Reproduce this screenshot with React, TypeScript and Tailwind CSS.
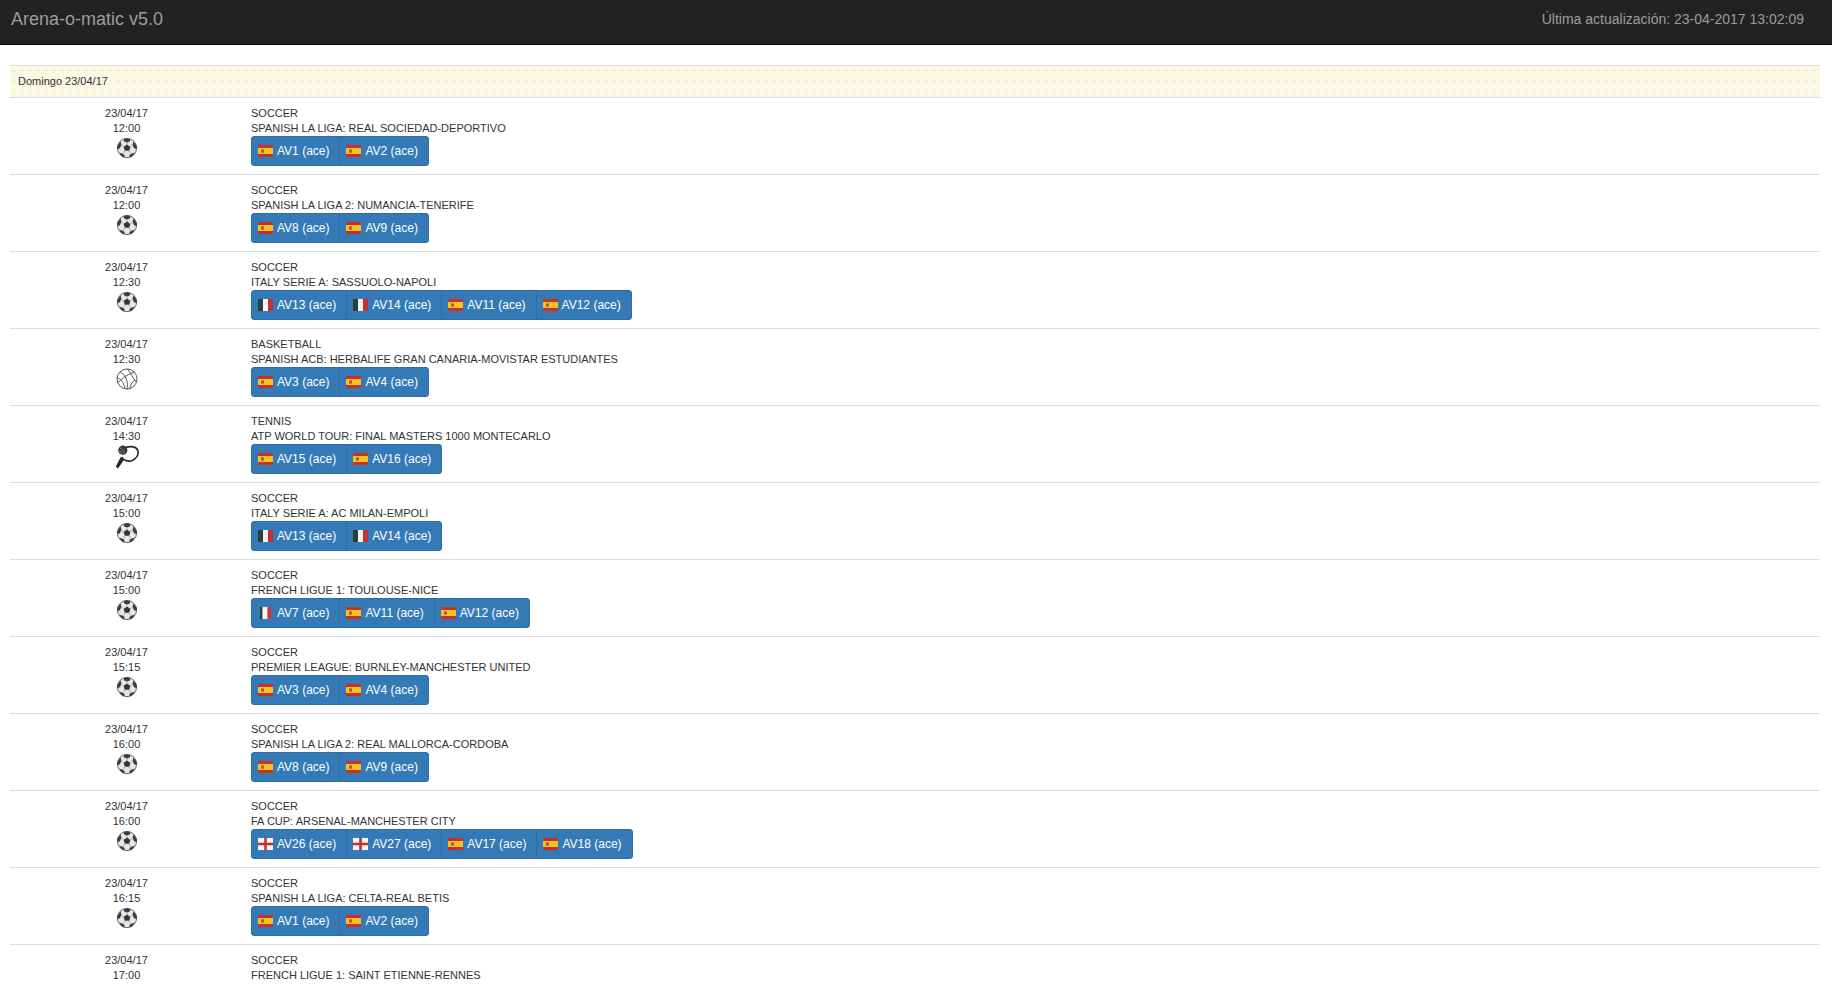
type FlagCode = "es" | "it" | "fr" | "en";
type Channel = { name: string; flag: FlagCode };
type EventRow = {
  time: string;
  sport: "SOCCER" | "BASKETBALL" | "TENNIS";
  title: string;
  channels: Channel[];
};

const es = (name: string): Channel => ({ name, flag: "es" });
const it = (name: string): Channel => ({ name, flag: "it" });

const events: EventRow[] = [
  { time: "12:00", sport: "SOCCER", title: "SPANISH LA LIGA: REAL SOCIEDAD-DEPORTIVO", channels: [es("AV1"), es("AV2")] },
  { time: "12:00", sport: "SOCCER", title: "SPANISH LA LIGA 2: NUMANCIA-TENERIFE", channels: [es("AV8"), es("AV9")] },
  { time: "12:30", sport: "SOCCER", title: "ITALY SERIE A: SASSUOLO-NAPOLI", channels: [it("AV13"), it("AV14"), es("AV11"), es("AV12")] },
  { time: "12:30", sport: "BASKETBALL", title: "SPANISH ACB: HERBALIFE GRAN CANARIA-MOVISTAR ESTUDIANTES", channels: [es("AV3"), es("AV4")] },
  { time: "14:30", sport: "TENNIS", title: "ATP WORLD TOUR: FINAL MASTERS 1000 MONTECARLO", channels: [es("AV15"), es("AV16")] },
  { time: "15:00", sport: "SOCCER", title: "ITALY SERIE A: AC MILAN-EMPOLI", channels: [it("AV13"), it("AV14")] },
  { time: "15:00", sport: "SOCCER", title: "FRENCH LIGUE 1: TOULOUSE-NICE", channels: [{ name: "AV7", flag: "fr" }, es("AV11"), es("AV12")] },
  { time: "15:15", sport: "SOCCER", title: "PREMIER LEAGUE: BURNLEY-MANCHESTER UNITED", channels: [es("AV3"), es("AV4")] },
  { time: "16:00", sport: "SOCCER", title: "SPANISH LA LIGA 2: REAL MALLORCA-CORDOBA", channels: [es("AV8"), es("AV9")] },
  { time: "16:00", sport: "SOCCER", title: "FA CUP: ARSENAL-MANCHESTER CITY", channels: [{ name: "AV26", flag: "en" }, { name: "AV27", flag: "en" }, es("AV17"), es("AV18")] },
  { time: "16:15", sport: "SOCCER", title: "SPANISH LA LIGA: CELTA-REAL BETIS", channels: [es("AV1"), es("AV2")] },
  { time: "17:00", sport: "SOCCER", title: "FRENCH LIGUE 1: SAINT ETIENNE-RENNES", channels: [] },
];

function Flag({ code }: { code: FlagCode }) {
  return (
    <svg width="15" height="12" viewBox="0 0 15 12" className="mb-[1px] shrink-0">
      {code === "es" && (
        <>
          <rect width="15" height="12" fill="#c9302c" />
          <rect y="3" width="15" height="6" fill="#f3c324" />
          <rect x="3.2" y="4.4" width="2.6" height="3.2" fill="#b5482a" />
        </>
      )}
      {code === "it" && (
        <>
          <rect width="15" height="12" fill="#f4f4f4" />
          <rect width="5" height="12" fill="#2b4037" />
          <rect x="10" width="5" height="12" fill="#c62f30" />
        </>
      )}
      {code === "fr" && (
        <>
          <rect x="2" width="11" height="12" fill="#f4f4f4" />
          <rect x="2" width="2.4" height="12" fill="#2b4037" />
          <rect x="9.4" width="3.6" height="12" fill="#d03436" />
        </>
      )}
      {code === "en" && (
        <>
          <rect width="15" height="12" fill="#f6f6f6" />
          <rect x="6.2" width="2.6" height="12" fill="#c9302c" />
          <rect y="4.7" width="15" height="2.6" fill="#c9302c" />
        </>
      )}
    </svg>
  );
}

function SoccerIcon() {
  return (
    <svg width="20" height="20" viewBox="0 0 20 20">
      <circle cx="10" cy="10" r="9.6" fill="#e8e8e8" stroke="#55555a" strokeWidth="0.9" />
      <path d="M10 6.4 13.4 8.9 12.2 12.8H7.8L6.6 8.9Z" fill="#34343a" />
      <path d="M6.6 1.2 10 .2l3.4 1-.6 2.4L10 4.6 7.2 3.6Z" fill="#3a3a40" />
      <path d="M16.4 3.4 19.8 8l-.2 3-2.6-.8-1.4-3.6Z" fill="#3a3a40" />
      <path d="M3.6 3.4.2 8l.2 3 2.6-.8 1.4-3.6Z" fill="#3a3a40" />
      <path d="M14.8 15.4 17.6 14.8 15.8 17.8 12.8 19.4l-.4-2.4Z" fill="#3a3a40" />
      <path d="M5.2 15.4 2.4 14.8 4.2 17.8 7.2 19.4l.4-2.4Z" fill="#3a3a40" />
      <path
        d="M10 4.6v2M13.4 9l2.4-2.4M12 12.8l1.4 2.6M8 12.8l-1.4 2.6M6.6 9 4.2 6.6"
        stroke="#8a8a8e"
        strokeWidth="0.7"
        fill="none"
      />
    </svg>
  );
}

function BasketballIcon() {
  return (
    <svg width="22" height="22" viewBox="0 0 22 22" fill="none" stroke="#45454f" strokeWidth="0.9">
      <circle cx="11" cy="11" r="10" />
      <path d="M4 3.6C8 6.6 9.8 9 10.8 12.4c.8 3 .8 5.8.2 8.8" />
      <path d="M18.6 4C13.4 5.4 6.4 9.6 1.6 15" />
      <path d="M11.6 .9c2.6 4 5.4 9 8.4 13" />
      <path d="M.9 9.4c3.4 1.2 6.6 4.6 8 10.8" />
      <path d="M14 20.6c.2-3 1.6-6 4.6-8.6" />
    </svg>
  );
}

function TennisIcon() {
  return (
    <svg width="24" height="24" viewBox="0 0 24 24" fill="none">
      <path
        d="M11 2.4C15.2 1 21.6 1.2 22.8 5.4c1.2 4.2-1.6 8-5 9.8-3 1.4-6.4 1-8.8-.6-.9-.6-1.6-1.4-2-2.6"
        stroke="#26262b"
        strokeWidth="1.7"
      />
      <circle cx="7.8" cy="5.2" r="4.6" fill="#36363c" />
      <path d="M5 3c2 .6 3.8 2.6 4.6 5.2M4 6c1.4.2 2.4 1.2 3 2.8" stroke="#c8c8c8" strokeWidth="0.6" />
      <path d="M6 11.6c.2 1.6 1.2 2.8 2.8 3.4L3 23.4 .8 21.6Z" fill="#26262b" />
    </svg>
  );
}

function SportIcon({ sport }: { sport: EventRow["sport"] }) {
  if (sport === "BASKETBALL") return <BasketballIcon />;
  if (sport === "TENNIS") return <TennisIcon />;
  return <SoccerIcon />;
}

export default function App() {
  return (
    <div className="h-screen overflow-hidden bg-white font-['Liberation_Sans',Arial,sans-serif] text-[11px] leading-[15px] text-[#333]">
      <nav className="flex h-[45px] items-start justify-between border-b border-[#080808] bg-[#222] pl-[11px] pr-[28px] pt-[9px] text-[#9d9d9d]">
        <span className="text-[18px] leading-[20px]">Arena-o-matic v5.0</span>
        <span className="text-[14px] leading-[20px]">Última actualización: 23-04-2017 13:02:09</span>
      </nav>

      <main className="ml-[10px] mr-[12px] mt-[20px]">
        <div className="flex h-[32px] items-center border-t border-[#ddd] bg-[#fbf8e4] bg-[radial-gradient(#efeacb_0.7px,transparent_0.9px)] bg-[length:8px_10px] pl-[8px]">
          Domingo 23/04/17
        </div>

        {events.map((row) => (
          <div key={row.title + row.time} className="flex h-[77px] border-t border-[#ddd] pt-[8px]">
            <div className="flex w-[233px] shrink-0 flex-col items-center text-center">
              <div>23/04/17</div>
              <div>{row.time}</div>
              {row.channels.length > 0 && (
                <div className={row.sport === "SOCCER" ? "mt-[2px]" : "mt-[1px]"}>
                  <SportIcon sport={row.sport} />
                </div>
              )}
            </div>
            <div className="pl-[8px]">
              <div>{row.sport}</div>
              <div>{row.title}</div>
              {row.channels.length > 0 && (
                <div className="flex">
                  {row.channels.map((ch, j) => (
                    <a
                      key={ch.name}
                      className={`flex h-[30px] items-center gap-[4px] border border-[#2e6da4] bg-[#337ab7] pl-[6px] pr-[10px] text-[12px] text-white ${
                        j > 0 ? "-ml-px" : "rounded-l-[3px]"
                      } ${j === row.channels.length - 1 ? "rounded-r-[3px]" : ""}`}
                    >
                      <Flag code={ch.flag} />
                      <span>{ch.name} (ace)</span>
                    </a>
                  ))}
                </div>
              )}
            </div>
          </div>
        ))}
      </main>
    </div>
  );
}
